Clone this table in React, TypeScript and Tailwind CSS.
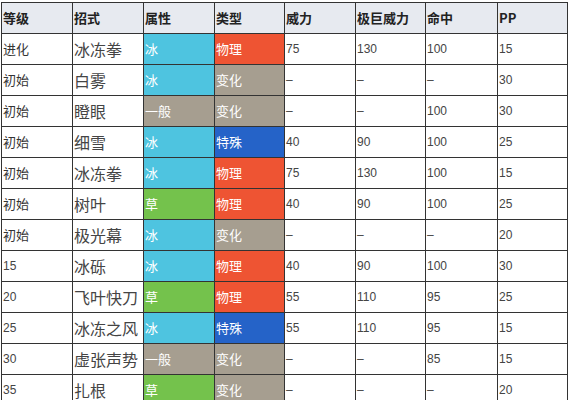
import React from "react";

type Row = [string, string, string, string, string, string, string, string];

const rows: Row[] = [
  ["进化", "冰冻拳", "冰", "物理", "75", "130", "100", "15"],
  ["初始", "白雾", "冰", "变化", "–", "–", "–", "30"],
  ["初始", "瞪眼", "一般", "变化", "–", "–", "100", "30"],
  ["初始", "细雪", "冰", "特殊", "40", "90", "100", "25"],
  ["初始", "冰冻拳", "冰", "物理", "75", "130", "100", "15"],
  ["初始", "树叶", "草", "物理", "40", "90", "100", "25"],
  ["初始", "极光幕", "冰", "变化", "–", "–", "–", "20"],
  ["15", "冰砾", "冰", "物理", "40", "90", "100", "30"],
  ["20", "飞叶快刀", "草", "物理", "55", "110", "95", "25"],
  ["25", "冰冻之风", "冰", "特殊", "55", "110", "95", "15"],
  ["30", "虚张声势", "一般", "变化", "–", "–", "85", "15"],
  ["35", "扎根", "草", "变化", "–", "–", "–", "20"],
];

const headers = ["等级", "招式", "属性", "类型", "威力", "极巨威力", "命中", "PP"];

const typeBg: Record<string, string> = {
  冰: "bg-[#4ec4e0]",
  草: "bg-[#74c24c]",
  一般: "bg-[#a69e90]",
  物理: "bg-[#ee5433]",
  变化: "bg-[#a69e90]",
  特殊: "bg-[#2563c8]",
};

const widths = ["w-[71px]", "w-[71px]", "w-[71px]", "w-[70px]", "w-[71px]", "w-[70px]", "w-[72px]", "w-[70px]"];

const cjk = "font-['Noto_Sans_CJK_SC',sans-serif]";

export default function App() {
  return (
    <div className="w-[571px] h-[400px] overflow-hidden bg-white pt-[2px] pl-[1px]">
      <div className="flex flex-col w-max border-l border-t border-[#333]">
        <div className="flex h-[31px] bg-[#e7eaf0]">
          {headers.map((h, i) => (
            <div
              key={h}
              className={`${widths[i]} shrink-0 border-r border-b border-[#333] flex items-center pl-[1px] text-[13px] font-bold text-[#222] ${cjk}`}
            >
              {h}
            </div>
          ))}
        </div>
        {rows.map((r, ri) => (
          <div key={ri} className="flex h-[31px]">
            {r.map((c, ci) => {
              const colored = ci === 2 || ci === 3;
              let cls = "";
              if (ci === 1) {
                cls = `text-[16px] text-[#444] ${cjk}`;
              } else if (colored) {
                cls = `${typeBg[c]} text-white text-[13px] ${cjk}`;
              } else if (ci === 0) {
                cls = /\d/.test(c)
                  ? "text-[12px] text-[#444] font-['Liberation_Sans',sans-serif]"
                  : `text-[13px] text-[#333] ${cjk}`;
              } else {
                cls = "text-[12px] text-[#444] font-['Liberation_Sans',sans-serif]";
              }
              return (
                <div
                  key={ci}
                  className={`${widths[ci]} shrink-0 border-r border-b border-[#333] flex items-center pl-[1px] ${cls}`}
                >
                  {c}
                </div>
              );
            })}
          </div>
        ))}
      </div>
    </div>
  );
}
